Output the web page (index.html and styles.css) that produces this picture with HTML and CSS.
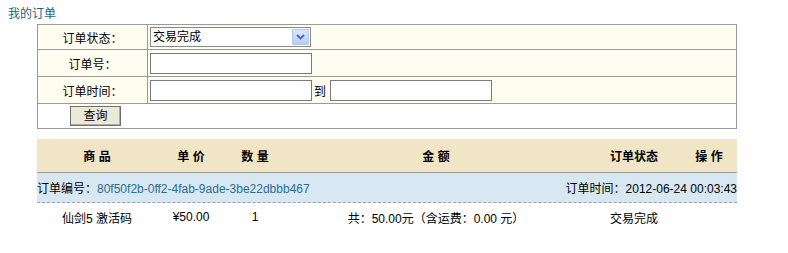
FILE: index.html
```html
<!DOCTYPE html>
<html>
<head>
<meta charset="utf-8">
<link rel="stylesheet" href="styles.css">
</head>
<body>
<div class="title">我的订单</div>
<table class="search">
  <tr>
    <td class="lbl">订单状态：</td>
    <td class="fld">
      <div class="sel">
        <select class="select"><option>交易完成</option></select>
        <span class="arrow"><svg width="9" height="6" viewBox="0 0 9 6"><path d="M1 1 L4.5 4.5 L8 1" fill="none" stroke="#4a6aa8" stroke-width="1.8"/></svg></span>
      </div>
    </td>
  </tr>
  <tr>
    <td class="lbl">订单号：</td>
    <td class="fld"><input class="txt" type="text"></td>
  </tr>
  <tr>
    <td class="lbl">订单时间：</td>
    <td class="fld"><input class="txt" type="text"><span class="to">到</span><input class="txt" type="text"></td>
  </tr>
  <tr>
    <td class="btncell" colspan="2"><button class="btn">查询</button></td>
  </tr>
</table>

<div class="orders">
  <div class="row head">
    <div>商 品</div>
    <div>单 价</div>
    <div>数 量</div>
    <div>金 额</div>
    <div>订单状态</div>
    <div>操 作</div>
  </div>
  <div class="orderbar">
    <span>订单编号：<a class="link" href="#">80f50f2b-0ff2-4fab-9ade-3be22dbbb467</a></span>
    <span>订单时间：2012-06-24 00:03:43</span>
  </div>
  <div class="row item">
    <div>仙剑5 激活码</div>
    <div>¥50.00</div>
    <div>1</div>
    <div>共：50.00元（含运费：0.00 元）</div>
    <div>交易完成</div>
    <div></div>
  </div>
</div>
</body>
</html>
```

FILE: styles.css
```css
html, body {
  margin: 0;
  padding: 0;
  background: #ffffff;
}
body {
  font-family: "Liberation Sans", "Noto Sans CJK SC", sans-serif;
  font-size: 12px;
  color: #000;
}
.title {
  padding: 4px 0 0 8px;
  height: 20px;
  line-height: 20px;
  color: #1e6478;
}
.search {
  margin-left: 37px;
  width: 700px;
  border-collapse: collapse;
}
.search td {
  border: 1px solid #9a9a9a;
  padding: 0;
}
.search tr:nth-child(1) td { height: 24px; }
.search tr:nth-child(2) td { height: 26px; }
.search tr:nth-child(3) td { height: 26px; }
.search tr:nth-child(4) td { height: 24px; }
.lbl {
  width: 109px;
  text-align: center;
  background: #fffcf0;
}
.fld {
  background: #fffcf0;
  padding-left: 2px !important;
}
.sel {
  position: relative;
  width: 161px;
  height: 20px;
}
.select {
  appearance: none;
  -webkit-appearance: none;
  width: 161px;
  height: 20px;
  margin: 0;
  border: 1px solid #7f9db9;
  border-color: #8a8a8a;
  background: #fff;
  font-family: "Liberation Sans", "Noto Sans CJK SC", sans-serif;
  font-size: 12px;
  padding: 0 0 0 2px;
  color: #000;
  border-radius: 0;
  display: block;
}
.arrow {
  position: absolute;
  right: 2px;
  top: 2px;
  width: 15px;
  height: 14px;
  border: 1px solid #b4c8ec;
  background: linear-gradient(#dbe6fb, #b9cdf5);
  display: flex;
  align-items: center;
  justify-content: center;
  border-radius: 1px;
}
.txt {
  width: 162px;
  height: 21px;
  box-sizing: border-box;
  border: 1px solid #7a7a7a;
  margin: 0;
  padding: 0;
  background: #fff;
  vertical-align: middle;
}
.to {
  display: inline-block;
  width: 18px;
  padding-left: 2px;
  box-sizing: border-box;
  vertical-align: middle;
}
.btncell {
  background: #fff;
  padding-left: 32px !important;
}
.btn {
  width: 51px;
  height: 20px;
  border: 1px solid #707070;
  background: #ece9d8;
  font-family: "Liberation Sans", "Noto Sans CJK SC", sans-serif;
  font-size: 12px;
  padding: 0;
  margin: 0;
  display: block;
  line-height: 17px;
  box-shadow: inset -1px -1px 0 #b0ad9c;
}
.orders {
  margin: 10px 0 0 37px;
  width: 700px;
}
.row {
  display: grid;
  grid-template-columns: 120px 68px 60px 302px 94px 56px;
  align-items: center;
  text-align: center;
}
.head {
  height: 33px;
  background: #f0e6c6;
  font-weight: bold;
  border-bottom: 1px solid #9a9a9a;
}
.orderbar {
  display: flex;
  justify-content: space-between;
  align-items: center;
  height: 29px;
  background: #d8e8f2;
  border-bottom: 1px dashed #9aa4aa;
}
.link {
  color: #2a6e8e;
  text-decoration: none;
}
.item {
  height: 28px;
}
```
